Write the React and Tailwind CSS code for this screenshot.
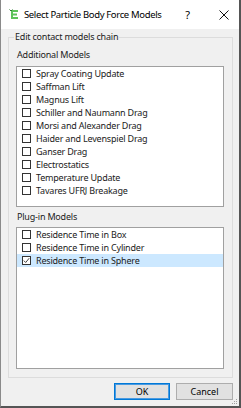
const additional = [
  'Spray Coating Update',
  'Saffman Lift',
  'Magnus Lift',
  'Schiller and Naumann Drag',
  'Morsi and Alexander Drag',
  'Haider and Levenspiel Drag',
  'Ganser Drag',
  'Electrostatics',
  'Temperature Update',
  'Tavares UFRJ Breakage',
]

const plugins = [
  { name: 'Residence Time in Box', checked: false },
  { name: 'Residence Time in Cylinder', checked: false },
  { name: 'Residence Time in Sphere', checked: true, selected: true },
]

function CheckRow({ label, checked, selected }) {
  return (
    <div className={`flex h-[13px] items-center pl-[5px] ${selected ? 'bg-[#cce8ff]' : ''}`}>
      <span className="flex h-[9px] w-[9px] shrink-0 items-center justify-center border border-[#333333] bg-white">
        {checked && (
          <svg width="7" height="7" viewBox="0 0 7 7">
            <path d="M0.8 3.6 L2.7 5.5 L6.2 1.2" fill="none" stroke="#444" strokeWidth="1" />
          </svg>
        )}
      </span>
      <span className="ml-[5px] whitespace-nowrap text-[9px] leading-[13px] tracking-[-0.2px] text-[#1b1b1b]">{label}</span>
    </div>
  )
}

export default function App() {
  return (
    <div
      className="flex h-[408px] w-[241px] flex-col border-b-2 border-l border-r-2 border-b-[#555555] border-l-[#8a8a8a] border-r-[#555555] bg-[#f0f0f0]"
      style={{ fontFamily: '"Noto Sans", "Open Sans", sans-serif' }}
    >
      {/* Title bar */}
      <div className="flex h-[29px] shrink-0 items-center bg-white">
        <svg className="ml-[8px] shrink-0" width="10" height="11" viewBox="0 0 10 11">
          <path d="M2 1 H9 V3 H4 V4.5 H8 V6.5 H4 V8 H9 V10 H2 Z" fill="#5cc35a" />
          <path d="M0.5 0.5 L2 2 L3.5 0.5" fill="none" stroke="#2f7f32" strokeWidth="1" />
        </svg>
        <span className="ml-[5px] whitespace-nowrap text-[9.5px] leading-[14px] tracking-[-0.35px] text-black">
          Select Particle Body Force Models
        </span>
        <span className="ml-auto text-[11px] leading-[14px] text-black">?</span>
        <svg className="ml-[29px] mr-[10px] shrink-0" width="10" height="10" viewBox="0 0 10 10">
          <path d="M0.5 0.5 L9.5 9.5 M9.5 0.5 L0.5 9.5" stroke="#111" strokeWidth="1" />
        </svg>
      </div>

      {/* Body */}
      <div className="relative flex flex-1 flex-col">
        <fieldset className="ml-[7px] mr-[6px] mt-[1px] min-w-0 border border-[#dcdcdc] pb-[8px] pl-[7px] pr-[8px]">
          <legend className="ml-[-2px] h-[14px] px-[1px] text-[9px] leading-[14px] tracking-[-0.2px] text-[#1b1b1b]">
            Edit contact models chain
          </legend>

          <div className="mt-[4px] h-[14px] pl-[1px] text-[9px] leading-[14px] tracking-[-0.2px] text-[#1b1b1b]">
            Additional Models
          </div>
          <div className="mt-[4px] h-[141px] border border-[#a0a0a0] bg-white">
            {additional.map(a => (
              <CheckRow key={a} label={a} />
            ))}
          </div>

          <div className="mt-[3px] h-[14px] pl-[1px] text-[9px] leading-[14px] tracking-[-0.2px] text-[#1b1b1b]">
            Plug-in Models
          </div>
          <div className="mt-[3px] h-[142px] border border-[#a0a0a0] bg-white">
            {plugins.map(p => (
              <CheckRow key={p.name} label={p.name} checked={p.checked} selected={p.selected} />
            ))}
          </div>
        </fieldset>

        {/* Buttons */}
        <div className="mr-[6px] mt-[5px] flex justify-end gap-[6px]">
          <button className="h-[17px] w-[56px] border border-[#0078d7] bg-[#e1e1e1] text-[9px] leading-[13px] text-black shadow-[inset_0_0_0_1px_#4a9ae0]">
            OK
          </button>
          <button className="h-[17px] w-[57px] border border-[#adadad] bg-[#e1e1e1] text-[9px] leading-[13px] text-black">
            Cancel
          </button>
        </div>

        {/* Size grip */}
        <svg className="absolute bottom-[1px] right-[1px]" width="6" height="6" viewBox="0 0 6 6">
          <rect x="4" y="0" width="1" height="1" fill="#a0a0a0" />
          <rect x="2" y="2" width="1" height="1" fill="#a0a0a0" />
          <rect x="4" y="2" width="1" height="1" fill="#a0a0a0" />
          <rect x="0" y="4" width="1" height="1" fill="#a0a0a0" />
          <rect x="2" y="4" width="1" height="1" fill="#a0a0a0" />
          <rect x="4" y="4" width="1" height="1" fill="#a0a0a0" />
        </svg>
      </div>
    </div>
  )
}
